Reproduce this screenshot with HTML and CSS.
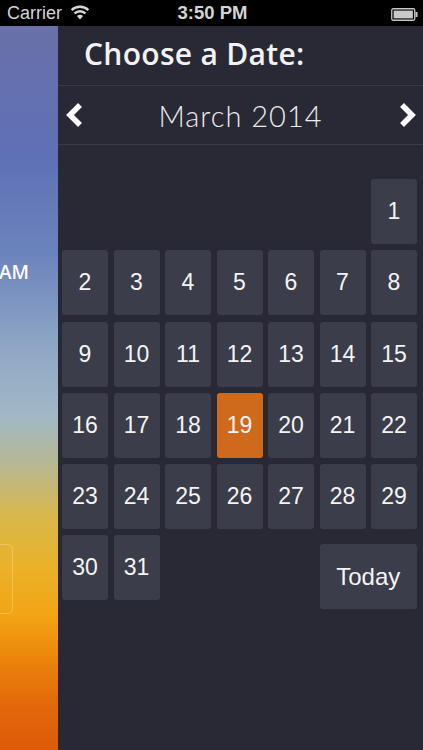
FILE: index.html
```html
<!DOCTYPE html>
<html>
<head>
<meta charset="utf-8">
<link rel="stylesheet" href="styles.css">
</head>
<body>
<div class="status">
  <div class="st-left">
    <span class="carrier">Carrier</span>
    <svg class="wifi" width="20" height="15" viewBox="0 0 20 15">
      <path d="M10 14.5 L7 11 A4.5 4.5 0 0 1 13 11 Z" fill="#d8d8d8"/>
      <path d="M4.6 8.4 A7.8 7.8 0 0 1 15.4 8.4" stroke="#d8d8d8" stroke-width="2.4" fill="none"/>
      <path d="M1.6 5.2 A12 12 0 0 1 18.4 5.2" stroke="#d8d8d8" stroke-width="2.4" fill="none"/>
    </svg>
  </div>
  <div class="st-time">3:50 PM</div>
  <div class="st-right">
    <svg width="27" height="13" viewBox="0 0 27 13">
      <rect x="0.75" y="0.75" width="23" height="11.5" rx="1.5" fill="none" stroke="#c8c8c8" stroke-width="1.3"/>
      <rect x="2.6" y="2.6" width="19.3" height="7.8" fill="#c8c8c8"/>
      <rect x="24.5" y="4" width="2" height="5" fill="#c8c8c8"/>
    </svg>
  </div>
</div>
<div class="main">
  <div class="strip">
    <div class="am">AM</div>
    <div class="ghost"></div>
  </div>
  <div class="panel">
    <div class="title">Choose a Date:</div>
    <div class="month">
      <svg class="chev" width="20" height="26" viewBox="0 0 20 26">
        <path d="M16 3 L6 13 L16 23" stroke="#ffffff" stroke-width="5.5" fill="none" stroke-linejoin="miter"/>
      </svg>
      <span class="month-name">March 2014</span>
      <svg class="chev" width="20" height="26" viewBox="0 0 20 26">
        <path d="M4 3 L14 13 L4 23" stroke="#ffffff" stroke-width="5.5" fill="none" stroke-linejoin="miter"/>
      </svg>
    </div>
    <div class="grid">
      <div class="day first">1</div>
      <div class="day">2</div><div class="day">3</div><div class="day">4</div><div class="day">5</div><div class="day">6</div><div class="day">7</div><div class="day">8</div>
      <div class="day">9</div><div class="day">10</div><div class="day">11</div><div class="day">12</div><div class="day">13</div><div class="day">14</div><div class="day">15</div>
      <div class="day">16</div><div class="day">17</div><div class="day">18</div><div class="day sel">19</div><div class="day">20</div><div class="day">21</div><div class="day">22</div>
      <div class="day">23</div><div class="day">24</div><div class="day">25</div><div class="day">26</div><div class="day">27</div><div class="day">28</div><div class="day">29</div>
      <div class="day">30</div><div class="day">31</div>
      <div class="day today">Today</div>
    </div>
  </div>
</div>
</body>
</html>
```
FILE: styles.css
```css
html, body {
  margin: 0;
  padding: 0;
  background: #000;
}
body {
  width: 423px;
  height: 750px;
  overflow: hidden;
  font-family: "Liberation Sans", Arial, sans-serif;
}
.status {
  height: 26px;
  background: #000;
  display: flex;
  align-items: center;
  justify-content: space-between;
  padding: 0 5px 0 7px;
  color: #d4d4d4;
  font-size: 18px;
}
.st-left {
  display: flex;
  align-items: center;
  gap: 8px;
  width: 120px;
}
.wifi { margin-top: -2px; }
.st-time {
  font-weight: bold;
  font-size: 18.5px;
}
.st-right {
  width: 120px;
  display: flex;
  justify-content: flex-end;
  padding-top: 2px;
}
.main {
  display: flex;
  height: 724px;
}
.strip {
  width: 58px;
  flex: none;
  background: linear-gradient(to bottom,
    #6a70a8 0px,
    #5f70b6 130px,
    #6c84bc 230px,
    #8ea6c4 320px,
    #a2b8c6 390px,
    #b8b890 440px,
    #d8b84a 490px,
    #eab22a 540px,
    #f2a414 590px,
    #ec860c 630px,
    #e2680a 680px,
    #de5a08 724px);
  display: flex;
  flex-direction: column;
  overflow: hidden;
}
.am {
  margin-top: 236px;
  color: #fff;
  font-family: "Open Sans", sans-serif;
  font-weight: 600;
  font-size: 19px;
  line-height: 20px;
  margin-left: -1px;
}
.ghost {
  margin-top: 262px;
  margin-left: -20px;
  width: 31px;
  height: 68px;
  border: 1px solid rgba(255, 220, 140, 0.45);
  border-radius: 5px;
}
.panel {
  flex: 1;
  background: #282934;
  display: flex;
  flex-direction: column;
}
.title {
  height: 60px;
  box-sizing: border-box;
  padding: 9px 0 0 26px;
  color: #f2f2f2;
  font-family: "Open Sans", sans-serif;
  font-weight: 600;
  font-size: 30px;
  letter-spacing: 0.3px;
  line-height: 38px;
  border-bottom: 1px solid #393a46;
}
.month {
  height: 59px;
  box-sizing: border-box;
  border-bottom: 1px solid #393a46;
  display: flex;
  align-items: center;
  justify-content: space-between;
  padding: 0 5px 0 6px;
}
.month-name {
  color: #ececec;
  font-family: "Lato", sans-serif;
  font-weight: 300;
  font-size: 29px;
  letter-spacing: 1px;
  margin-left: -1px;
}
.grid {
  margin-top: 34px;
  padding-left: 4px;
  display: grid;
  grid-template-columns: repeat(7, 46px);
  grid-auto-rows: 65px;
  column-gap: 5.5px;
  row-gap: 6.3px;
}
.day {
  background: #3b3d4a;
  border-radius: 3px;
  color: #f4f4f4;
  font-size: 23px;
  display: flex;
  align-items: center;
  justify-content: center;
}
.first {
  grid-column: 7;
}
.sel {
  background: #cf6a1d;
}
.today {
  grid-column: 6 / 8;
  align-self: start;
  height: 65px;
  margin-top: 9px;
  font-size: 24px;
}
```
